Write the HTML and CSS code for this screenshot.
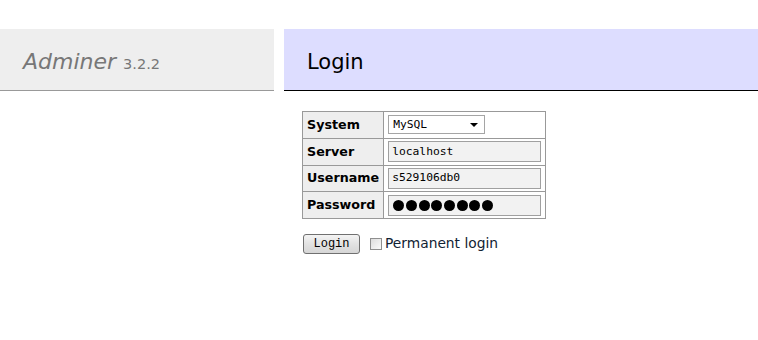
FILE: index.html
```html
<!DOCTYPE html>
<html>
<head>
<meta charset="utf-8">
<title>Login - Adminer</title>
<link rel="stylesheet" href="styles.css">
</head>
<body>
<div class="page">
  <div class="menu">
    <h1 class="brand"><span class="brand-name">Adminer</span> <span class="version">3.2.2</span></h1>
  </div>
  <div class="content">
    <h2 class="title">Login</h2>
    <form class="login-form">
      <table class="fields">
        <tr>
          <th>System</th>
          <td><div class="select"><span>MySQL</span><span class="arrow"></span></div></td>
        </tr>
        <tr>
          <th>Server</th>
          <td><div class="field">localhost</div></td>
        </tr>
        <tr>
          <th>Username</th>
          <td><div class="field">s529106db0</div></td>
        </tr>
        <tr>
          <th>Password</th>
          <td><div class="field dots"><i></i><i></i><i></i><i></i><i></i><i></i><i></i><i></i></div></td>
        </tr>
      </table>
      <div class="actions">
        <button type="button" class="btn">Login</button>
        <label class="perm"><span class="check"></span>Permanent login</label>
      </div>
    </form>
  </div>
</div>
</body>
</html>
```

FILE: styles.css
```css
html, body {
  margin: 0;
  padding: 0;
  background: #fff;
}
body {
  font-family: "DejaVu Sans", Verdana, sans-serif;
  font-size: 13.6px;
  line-height: 1.25;
  color: #000;
}
.page {
  display: flex;
  align-items: flex-start;
  padding-top: 29px;
}
.menu {
  width: 274px;
  flex: none;
}
.brand {
  margin: 0;
  height: 62px;
  box-sizing: border-box;
  padding: 21px 0 0 23px;
  background: #eee;
  border-bottom: 1px solid #999;
  font-weight: normal;
  color: #777;
  font-size: 22px;
  line-height: 24px;
  white-space: nowrap;
}
.brand-name {
  font-style: italic;
}
.version {
  font-size: 14.5px;
  color: #777;
}
.content {
  flex: 1;
  margin-left: 10px;
}
.title {
  margin: 0 0 20px 0;
  height: 62px;
  box-sizing: border-box;
  padding: 21px 0 0 23px;
  background: #ddf;
  border-bottom: 1px solid #000;
  font-weight: normal;
  font-size: 21px;
  line-height: 24px;
  color: #000;
}
.login-form {
  padding-left: 18px;
}
.fields {
  border-collapse: collapse;
  border: 1px solid #999;
}
.fields th, .fields td {
  border: 1px solid #999;
  height: 26.75px;
  box-sizing: border-box;
  padding: 0 4px;
  vertical-align: middle;
}
.fields th {
  background: #eee;
  text-align: left;
  font-weight: bold;
  font-size: 12.7px;
  width: 71px;
  padding-left: 4px;
  padding-right: 4px;
}
.fields td {
  width: 159px;
}
.select {
  width: 97px;
  height: 19px;
  box-sizing: border-box;
  border: 1px solid #a5a5a5;
  background: #fff;
  display: flex;
  align-items: center;
  justify-content: space-between;
  padding: 0 6px 0 4px;
  font-family: "DejaVu Sans Mono", "Liberation Mono", monospace;
  font-size: 11.3px;
}
.arrow {
  width: 0;
  height: 0;
  border-left: 4px solid transparent;
  border-right: 4px solid transparent;
  border-top: 4px solid #000;
}
.field {
  width: 153px;
  height: 21px;
  box-sizing: border-box;
  border: 1px solid #a0a0a0;
  background: #f2f2f2;
  display: flex;
  align-items: center;
  padding: 0 3px;
  font-family: "DejaVu Sans Mono", "Liberation Mono", monospace;
  font-size: 11.3px;
}
.dots {
  gap: 1.7px;
  padding-left: 4px;
}
.dots i {
  width: 11px;
  height: 11px;
  border-radius: 50%;
  background: #000;
}
.actions {
  display: flex;
  align-items: center;
  margin-top: 15px;
  margin-left: 1px;
}
.btn {
  width: 57px;
  height: 20px;
  padding: 0;
  border: 1px solid #707070;
  border-radius: 3px;
  background: linear-gradient(#f4f4f4, #e2e2e2 50%, #d6d6d6);
  font-family: "Liberation Mono", "DejaVu Sans Mono", monospace;
  font-size: 12px;
  color: #000;
}
.perm {
  display: flex;
  align-items: center;
  margin-left: 10px;
  color: #123;
  font-size: 13.8px;
}
.check {
  width: 12px;
  height: 12px;
  box-sizing: border-box;
  border: 1px solid #8f8f8f;
  background: linear-gradient(135deg, #ddd, #fbfbfb);
  margin-right: 3px;
}
```
